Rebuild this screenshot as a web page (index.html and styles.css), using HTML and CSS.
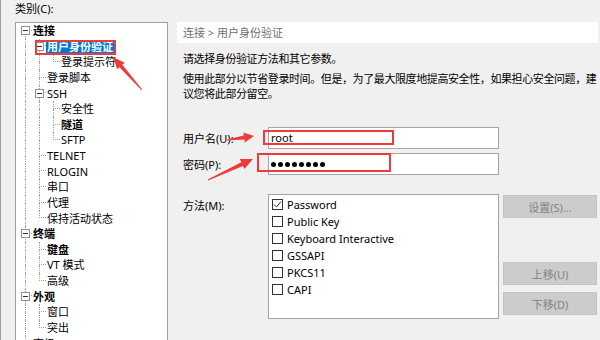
FILE: index.html
```html
<!DOCTYPE html>
<html lang="zh-CN">
<head>
<meta charset="utf-8">
<title>用户身份验证</title>
<link rel="stylesheet" href="styles.css">
</head>
<body>
<div class="window">
  <aside class="left">
    <div class="cat-label">类别(C):</div>
    <div class="tree">
      <div class="row"><span class="g g-f"><span class="ln"><span class="up"></span><span class="dn"></span></span><span class="box"></span></span><span class="t b">连接</span></div>
      <div class="row"><span class="g g-v"><span class="ln"><span class="up"></span><span class="dn"></span></span></span><span class="g g-t"><span class="ln"><span class="up"></span><span class="dn"></span></span><span class="box"></span></span><span class="t b sel">用户身份验证</span></div>
      <div class="row"><span class="g g-v"><span class="ln"><span class="up"></span><span class="dn"></span></span></span><span class="g g-v"><span class="ln"><span class="up"></span><span class="dn"></span></span></span><span class="g g-l"><span class="ln"><span class="up"></span><span class="dn"></span></span></span><span class="t">登录提示符</span></div>
      <div class="row"><span class="g g-v"><span class="ln"><span class="up"></span><span class="dn"></span></span></span><span class="g g-t"><span class="ln"><span class="up"></span><span class="dn"></span></span></span><span class="t">登录脚本</span></div>
      <div class="row"><span class="g g-v"><span class="ln"><span class="up"></span><span class="dn"></span></span></span><span class="g g-t"><span class="ln"><span class="up"></span><span class="dn"></span></span><span class="box"></span></span><span class="t">SSH</span></div>
      <div class="row"><span class="g g-v"><span class="ln"><span class="up"></span><span class="dn"></span></span></span><span class="g g-v"><span class="ln"><span class="up"></span><span class="dn"></span></span></span><span class="g g-t"><span class="ln"><span class="up"></span><span class="dn"></span></span></span><span class="t">安全性</span></div>
      <div class="row"><span class="g g-v"><span class="ln"><span class="up"></span><span class="dn"></span></span></span><span class="g g-v"><span class="ln"><span class="up"></span><span class="dn"></span></span></span><span class="g g-t"><span class="ln"><span class="up"></span><span class="dn"></span></span></span><span class="t b">隧道</span></div>
      <div class="row"><span class="g g-v"><span class="ln"><span class="up"></span><span class="dn"></span></span></span><span class="g g-v"><span class="ln"><span class="up"></span><span class="dn"></span></span></span><span class="g g-l"><span class="ln"><span class="up"></span><span class="dn"></span></span></span><span class="t">SFTP</span></div>
      <div class="row"><span class="g g-v"><span class="ln"><span class="up"></span><span class="dn"></span></span></span><span class="g g-t"><span class="ln"><span class="up"></span><span class="dn"></span></span></span><span class="t">TELNET</span></div>
      <div class="row"><span class="g g-v"><span class="ln"><span class="up"></span><span class="dn"></span></span></span><span class="g g-t"><span class="ln"><span class="up"></span><span class="dn"></span></span></span><span class="t">RLOGIN</span></div>
      <div class="row"><span class="g g-v"><span class="ln"><span class="up"></span><span class="dn"></span></span></span><span class="g g-t"><span class="ln"><span class="up"></span><span class="dn"></span></span></span><span class="t">串口</span></div>
      <div class="row"><span class="g g-v"><span class="ln"><span class="up"></span><span class="dn"></span></span></span><span class="g g-t"><span class="ln"><span class="up"></span><span class="dn"></span></span></span><span class="t">代理</span></div>
      <div class="row"><span class="g g-v"><span class="ln"><span class="up"></span><span class="dn"></span></span></span><span class="g g-l"><span class="ln"><span class="up"></span><span class="dn"></span></span></span><span class="t">保持活动状态</span></div>
      <div class="row"><span class="g g-t"><span class="ln"><span class="up"></span><span class="dn"></span></span><span class="box"></span></span><span class="t b">终端</span></div>
      <div class="row"><span class="g g-v"><span class="ln"><span class="up"></span><span class="dn"></span></span></span><span class="g g-t"><span class="ln"><span class="up"></span><span class="dn"></span></span></span><span class="t b">键盘</span></div>
      <div class="row"><span class="g g-v"><span class="ln"><span class="up"></span><span class="dn"></span></span></span><span class="g g-t"><span class="ln"><span class="up"></span><span class="dn"></span></span></span><span class="t">VT 模式</span></div>
      <div class="row"><span class="g g-v"><span class="ln"><span class="up"></span><span class="dn"></span></span></span><span class="g g-l"><span class="ln"><span class="up"></span><span class="dn"></span></span></span><span class="t">高级</span></div>
      <div class="row"><span class="g g-t"><span class="ln"><span class="up"></span><span class="dn"></span></span><span class="box"></span></span><span class="t b">外观</span></div>
      <div class="row"><span class="g g-v"><span class="ln"><span class="up"></span><span class="dn"></span></span></span><span class="g g-t"><span class="ln"><span class="up"></span><span class="dn"></span></span></span><span class="t">窗口</span></div>
      <div class="row"><span class="g g-v"><span class="ln"><span class="up"></span><span class="dn"></span></span></span><span class="g g-l"><span class="ln"><span class="up"></span><span class="dn"></span></span></span><span class="t">突出</span></div>
      <div class="row"><span class="g g-t"><span class="ln"><span class="up"></span><span class="dn"></span></span></span><span class="t">高级</span></div>
    </div>
  </aside>

  <main class="panel">
    <div class="crumb">连接 &gt; 用户身份验证</div>
    <p class="desc d1">请选择身份验证方法和其它参数。</p>
    <p class="desc d2">使用此部分以节省登录时间。但是，为了最大限度地提高安全性，如果担心安全问题，建<br>议您将此部分留空。</p>
    <div class="form">
      <div class="field"><label class="lbl">用户名(U):</label><div class="input">root</div></div>
      <div class="field"><label class="lbl">密码(P):</label><div class="input"><span class="dots"><i></i><i></i><i></i><i></i><i></i><i></i><i></i><i></i></span></div></div>
    </div>
    <div class="method">
      <label class="lbl mlbl">方法(M):</label>
      <div class="listbox">
        <div class="opt"><span class="cb"><svg width="9" height="9" viewBox="0 0 9 9"><polyline points="1,4.5 3.5,7 8,1.5" fill="none" stroke="#333" stroke-width="1"/></svg></span><span>Password</span></div>
        <div class="opt"><span class="cb"></span><span>Public Key</span></div>
        <div class="opt"><span class="cb"></span><span>Keyboard Interactive</span></div>
        <div class="opt"><span class="cb"></span><span>GSSAPI</span></div>
        <div class="opt"><span class="cb"></span><span>PKCS11</span></div>
        <div class="opt"><span class="cb"></span><span>CAPI</span></div>
      </div>
      <div class="btns">
        <div class="btn btn1">设置(S)...</div>
        <div class="btn btn2">上移(U)</div>
        <div class="btn btn3">下移(D)</div>
      </div>
    </div>
  </main>

  <svg class="annot" width="600" height="340" viewBox="0 0 600 340">
    <g fill="none" stroke="#ec3b3b" stroke-width="2">
      <rect x="35" y="41" width="79" height="13"/>
      <rect x="263" y="131" width="129" height="13"/>
      <rect x="257" y="154" width="132" height="17"/>
    </g>
    <g fill="#ec3b3b">
      <polygon points="112,57 123.7,62.7 121.4,64.7 141.4,89.7 140.6,90.3 118.4,67.3 116.2,69.3"/>
      <polygon points="253,136 243.8,142.4 243.4,139.5 226,140.6 226,139.4 242.8,135.5 242.4,132.6"/>
      <polygon points="252,159 243.4,169.1 241.9,165.9 207.2,180.4 206.8,179.6 240.3,162.3 238.8,159.1"/>
    </g>
  </svg>
</div>
</body>
</html>
```
FILE: styles.css
```css
* { box-sizing: border-box; margin: 0; padding: 0; }
html, body { width: 600px; height: 340px; overflow: hidden; }
body {
  background: #f0f0f0;
  font-family: "Noto Sans", "Noto Sans CJK SC", sans-serif;
  font-size: 11px;
  color: #000;
}
.window {
  position: relative;
  display: flex;
  width: 600px;
  height: 340px;
  border-left: 1px solid #a0a0a0;
  overflow: hidden;
}
.left {
  width: 176px;
  flex: none;
  padding-left: 14px;
  padding-right: 9px;
  display: flex;
  flex-direction: column;
}
.cat-label { height: 22px; flex: none; line-height: 18px; }
.tree {
  background: #fff;
  border: 1px solid #a0a0a0;
  height: 400px;
  flex: none;
  padding-left: 2px;
}
.row { display: flex; height: 15.63px; }
.g { width: 14px; flex: none; display: grid; }
.g > * { grid-area: 1 / 1; }
.ln { display: flex; flex-direction: column; }
.up { height: 7.8px; margin-left: 7px; }
.dn { flex: 1; margin-left: 7px; }
.g-v .up, .g-t .up, .g-l .up { border-left: 1px dotted #a0a0a0; }
.g-v .dn, .g-t .dn, .g-f .dn { border-left: 1px dotted #a0a0a0; }
.g-t .up, .g-l .up, .g-f .up { border-bottom: 1px dotted #a0a0a0; }
.box {
  width: 9px;
  height: 9px;
  margin-left: 3px;
  align-self: center;
  justify-self: start;
  background: #fff;
  border: 1px solid #919191;
  display: grid;
  place-items: center;
}
.box::before { content: ""; width: 5px; height: 1px; background: #333; }
.t { padding-left: 1px; line-height: 15.63px; white-space: nowrap; }
.b { font-weight: bold; }
.sel {
  background: #0078d7;
  color: #fff;
  align-self: center;
  height: 13px;
  line-height: 13px;
  padding: 0 1px;
}
.panel {
  flex: none;
  width: 421px;
  padding-top: 22px;
  display: flex;
  flex-direction: column;
}
.crumb {
  background: #fff;
  height: 21px;
  flex: none;
  line-height: 21px;
  padding-left: 6px;
  color: #707070;
}
.desc { padding-left: 6px; line-height: 15px; white-space: nowrap; letter-spacing: -0.4px; flex: none; }
.d1 { margin-top: 7.5px; }
.d2 { margin-top: 5px; }
.form {
  margin-top: 26.5px;
  padding-left: 6px;
  display: flex;
  flex-direction: column;
  gap: 4px;
  flex: none;
}
.field { display: flex; align-items: center; }
.lbl { width: 85px; flex: none; }
.input {
  width: 231px;
  height: 22px;
  background: #fff;
  border: 1px solid #a5a5a5;
  padding-left: 2px;
  line-height: 20px;
  display: flex;
  align-items: center;
}
.dots { display: flex; gap: 2px; align-items: center; }
.dots i { display: block; width: 5px; height: 5px; border-radius: 50%; background: #000; }
.method { margin-top: 19px; padding-left: 6px; display: flex; flex: none; }
.mlbl { margin-top: 4px; line-height: 15px; }
.listbox {
  width: 231px;
  height: 125px;
  flex: none;
  background: #fff;
  border: 1px solid #a5a5a5;
  padding: 1px 3px;
}
.opt { display: flex; align-items: center; height: 17px; gap: 4px; white-space: nowrap; }
.cb {
  width: 11px;
  height: 11px;
  flex: none;
  border: 1px solid #333;
  background: #fff;
  display: grid;
  place-items: center;
}
.cb svg { display: block; }
.btns { margin-left: 4px; width: 94px; flex: none; display: flex; flex-direction: column; }
.btn {
  height: 23px;
  flex: none;
  background: #cccccc;
  border: 1px solid #c4c4c4;
  color: #838383;
  display: flex;
  align-items: center;
  justify-content: center;
}
.btn1 { margin-top: 1px; }
.btn2 { margin-top: 44px; }
.btn3 { margin-top: 7px; }
.annot { position: absolute; left: 0; top: 0; pointer-events: none; }
```
